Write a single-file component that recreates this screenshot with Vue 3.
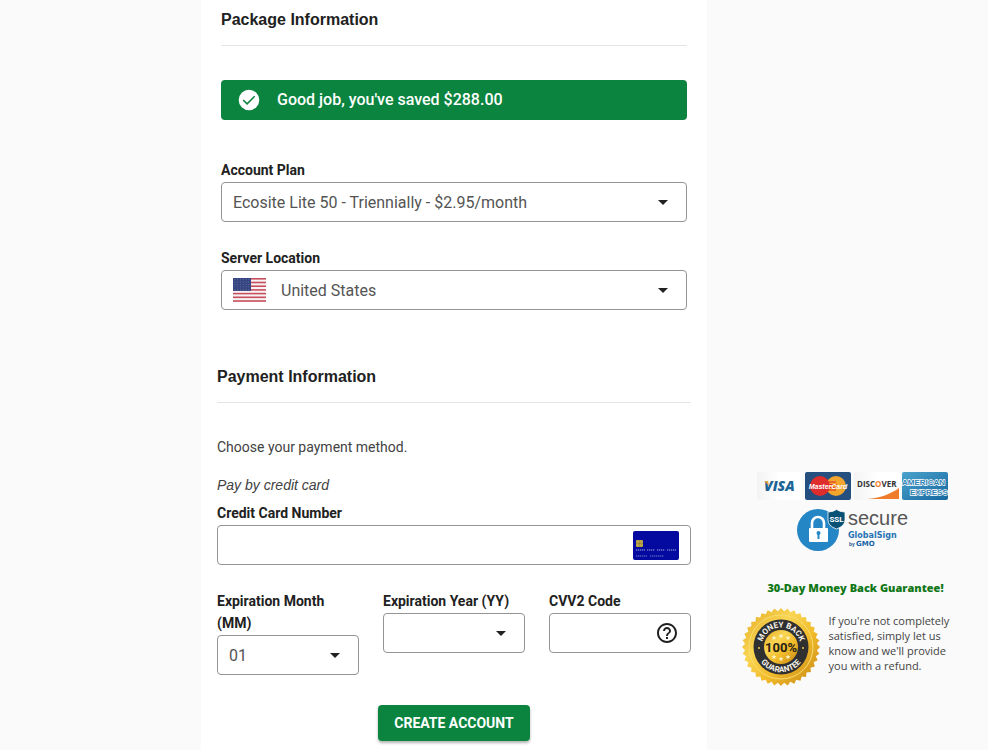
<template>
    <div class="page">
        <form class="checkout" @submit.prevent>
            <section class="package">
                <h2>Package Information</h2>

                <div class="alert" role="status">
                    <svg width="24" height="24" viewBox="0 0 24 24">
                        <circle cx="12" cy="12" r="10.3" fill="#fff" />
                        <path
                            d="M6.2 12l3.9 3.9 7.6-7.6"
                            fill="none"
                            stroke="#0a843e"
                            stroke-width="1.5"
                        />
                    </svg>
                    <span>Good job, you've saved $288.00</span>
                </div>

                <div class="field">
                    <label for="plan">Account Plan</label>
                    <div class="box">
                        <select id="plan" v-model="plan">
                            <option v-for="p in plans" :key="p">{{ p }}</option>
                        </select>
                        <svg class="arrow" viewBox="0 0 24 24">
                            <path d="M7 10l5 5 5-5z" />
                        </svg>
                    </div>
                </div>

                <div class="field">
                    <label for="location">Server Location</label>
                    <div class="box">
                        <svg class="flag" viewBox="0 0 33 24">
                            <rect width="33" height="24" fill="#f7f3f4" />
                            <rect
                                v-for="n in 7"
                                :key="n"
                                :y="(n - 1) * 3.7"
                                width="33"
                                height="1.6"
                                fill="#c8505e"
                            />
                            <rect width="18" height="12.9" fill="#374680" />
                            <template v-for="r in 5" :key="r">
                                <circle
                                    v-for="c in 6"
                                    :key="c"
                                    :cx="c * 2.8 - 0.9"
                                    :cy="r * 2.4 - 0.8"
                                    r="0.4"
                                    fill="#8d99c2"
                                />
                            </template>
                        </svg>
                        <select id="location" v-model="country">
                            <option v-for="c in countries" :key="c">
                                {{ c }}
                            </option>
                        </select>
                        <svg class="arrow" viewBox="0 0 24 24">
                            <path d="M7 10l5 5 5-5z" />
                        </svg>
                    </div>
                </div>
            </section>

            <section class="payment">
                <h2>Payment Information</h2>
                <p>Choose your payment method.</p>
                <p class="method">Pay by credit card</p>

                <div class="field">
                    <label for="card">Credit Card Number</label>
                    <div class="box">
                        <input id="card" v-model="card" type="text" />
                        <svg class="card-icon" viewBox="0 0 46 29">
                            <rect width="46" height="29" rx="2" fill="#0409a0" />
                            <rect
                                x="3"
                                y="9"
                                width="7"
                                height="7"
                                rx="1"
                                fill="#b9a548"
                            />
                            <path d="M3 12.5h7M6.5 9v7" stroke="#85783d" stroke-width="0.5" />
                            <path
                                d="M3 19h9M14 19h8M24 19h8M34 19h9"
                                stroke="#7077c6"
                                stroke-width="1.6"
                                stroke-dasharray="1.3 0.7"
                            />
                            <path
                                d="M3 25h11M17 25h14"
                                stroke="#4a51b8"
                                stroke-width="1.3"
                                stroke-dasharray="1.4 0.6"
                            />
                        </svg>
                    </div>
                </div>

                <div class="card-details">
                    <div class="field">
                        <label for="month">Expiration Month (MM)</label>
                        <div class="box">
                            <select id="month" v-model="month">
                                <option v-for="m in months" :key="m">
                                    {{ m }}
                                </option>
                            </select>
                            <svg class="arrow" viewBox="0 0 24 24">
                                <path d="M7 10l5 5 5-5z" />
                            </svg>
                        </div>
                    </div>
                    <div class="field">
                        <label for="year">Expiration Year (YY)</label>
                        <div class="box">
                            <select id="year" v-model="year">
                                <option value=""></option>
                                <option v-for="y in years" :key="y">
                                    {{ y }}
                                </option>
                            </select>
                            <svg class="arrow" viewBox="0 0 24 24">
                                <path d="M7 10l5 5 5-5z" />
                            </svg>
                        </div>
                    </div>
                    <div class="field">
                        <label for="cvv">CVV2 Code</label>
                        <div class="box">
                            <input id="cvv" v-model="cvv" type="text" />
                            <svg class="help" viewBox="0 0 24 24">
                                <path
                                    d="M11 18h2v-2h-2v2zm1-16C6.48 2 2 6.48 2 12s4.48 10 10 10 10-4.48 10-10S17.52 2 12 2zm0 18c-4.41 0-8-3.59-8-8s3.59-8 8-8 8 3.59 8 8-3.59 8-8 8zm0-14c-2.21 0-4 1.79-4 4h2c0-1.1.9-2 2-2s2 .9 2 2c0 2-3 1.75-3 5h2c0-2.25 3-2.5 3-5 0-2.21-1.79-4-4-4z"
                                />
                            </svg>
                        </div>
                    </div>
                </div>

                <button type="submit" class="submit">CREATE ACCOUNT</button>
            </section>
        </form>

        <aside class="trust">
            <div class="trust-inner">
                <div class="logos">
                    <svg width="192" height="28" viewBox="0 0 192 28">
                        <defs>
                            <linearGradient id="paper" x2="1" y2="0">
                                <stop offset="0" stop-color="#f3f3f3" />
                                <stop offset="0.5" stop-color="#fff" />
                            </linearGradient>
                            <linearGradient id="amex" x2="1" y2="1">
                                <stop offset="0" stop-color="#4ba3cc" />
                                <stop offset="1" stop-color="#1668a0" />
                            </linearGradient>
                        </defs>
                        <rect width="45" height="28" rx="2" fill="url(#paper)" />
                        <text
                            x="7"
                            y="19"
                            font-family="Open Sans, sans-serif"
                            font-size="14"
                            font-weight="800"
                            font-style="italic"
                            fill="#1d6496"
                        >VISA</text>
                        <path d="M7.4 9h3.6l1 5z" fill="#e8a13c" />

                        <rect x="48" width="46" height="28" rx="2" fill="#254f7f" />
                        <circle cx="79" cy="14" r="10" fill="#f2a62e" />
                        <circle cx="63" cy="14" r="10" fill="#df2c2d" />
                        <path
                            d="M72 10h7M71 12.5h9M71 15.5h9M72 18h7"
                            stroke="#df2c2d"
                            stroke-width="1"
                        />
                        <text
                            x="71"
                            y="17"
                            text-anchor="middle"
                            font-family="Liberation Sans, sans-serif"
                            font-size="7"
                            font-weight="700"
                            font-style="italic"
                            fill="#fff"
                        >MasterCard</text>

                        <rect x="97" width="46" height="28" rx="2" fill="url(#paper)" />
                        <text
                            x="100"
                            y="15"
                            font-family="Open Sans, sans-serif"
                            font-size="8"
                            font-weight="700"
                            fill="#333"
                        >DISC<tspan fill="#ee7c2b">O</tspan>VER</text>
                        <path d="M110 27c13-1 24-5 32-11v11z" fill="#ee7c2b" />

                        <rect x="145" width="46" height="28" rx="2" fill="url(#amex)" />
                        <g
                            font-family="Liberation Sans, sans-serif"
                            font-size="8"
                            font-weight="700"
                            fill="#2e83b3"
                            stroke="#fff"
                            stroke-width="1.3"
                            paint-order="stroke"
                        >
                            <text x="145" y="13">AMERICAN</text>
                            <text x="153" y="23">EXPRESS</text>
                        </g>
                    </svg>

                    <svg width="112" height="44" viewBox="0 0 112 44">
                        <circle cx="21" cy="22" r="21" fill="#2486c5" />
                        <path
                            d="M15 21v-6a6 6 0 0 1 12 0v6"
                            fill="none"
                            stroke="#fff"
                            stroke-width="2.6"
                        />
                        <rect x="12" y="20" width="19" height="14" rx="1" fill="#fff" />
                        <circle cx="21.5" cy="25" r="2" fill="#2486c5" />
                        <rect x="20.5" y="25" width="2" height="6" fill="#2486c5" />
                        <path
                            d="M31 4q5 0 8.5-2.5Q43 4 48 4v8q0 6-8.5 9Q31 18 31 12z"
                            fill="#0a5176"
                            stroke="#fafafa"
                            stroke-width="0.8"
                        />
                        <text
                            x="39.5"
                            y="14"
                            text-anchor="middle"
                            font-family="Roboto, sans-serif"
                            font-size="8"
                            font-weight="700"
                            fill="#fff"
                        >SSL</text>
                        <text
                            x="51"
                            y="17"
                            font-family="Liberation Sans, sans-serif"
                            font-size="20"
                            fill="#555"
                        >secure</text>
                        <text
                            x="51"
                            y="30"
                            font-family="DejaVu Sans, sans-serif"
                            font-size="8"
                            font-weight="700"
                            fill="#2673b3"
                        >GlobalSign</text>
                        <text
                            x="52"
                            y="38"
                            font-family="Liberation Sans, sans-serif"
                            font-size="5"
                            font-weight="700"
                            fill="#174f86"
                        >by</text>
                        <text
                            x="59"
                            y="38"
                            font-family="DejaVu Sans, sans-serif"
                            font-size="7"
                            font-weight="700"
                            fill="#1762a5"
                        >GMO</text>
                    </svg>
                </div>

                <h3>30-Day Money Back Guarantee!</h3>

                <div class="guarantee">
                    <svg class="seal" viewBox="0 0 80 80">
                        <defs>
                            <linearGradient id="gold" x2="1" y2="1">
                                <stop offset="0" stop-color="#e2a51c" />
                                <stop offset="0.35" stop-color="#f9d654" />
                                <stop offset="0.6" stop-color="#f3bd2c" />
                                <stop offset="1" stop-color="#c48411" />
                            </linearGradient>
                            <path id="arc-top" d="M20.5 40a19.5 19.5 0 0 1 39 0" />
                            <path id="arc-bottom" d="M14.8 40a25.2 25.2 0 0 0 50.400 0" />
                        </defs>
                        <polygon :points="sealPoints" fill="url(#gold)" />
                        <circle
                            cx="40"
                            cy="40"
                            r="32"
                            fill="none"
                            stroke="#f8dc72"
                            stroke-width="1"
                        />
                        <circle cx="40" cy="40" r="27.5" fill="#303031" />
                        <circle cx="40" cy="40" r="17" fill="url(#gold)" />
                        <g
                            font-family="Roboto, sans-serif"
                            font-size="8"
                            font-weight="700"
                            fill="#f7f4ea"
                            text-anchor="middle"
                        >
                            <text>
                                <textPath href="#arc-top" startOffset="50%">MONEY BACK</textPath>
                            </text>
                            <text>
                                <textPath href="#arc-bottom" startOffset="50%">GUARANTEE</textPath>
                            </text>
                        </g>
                        <circle cx="18" cy="41" r="1" fill="#f3c64a" />
                        <circle cx="62" cy="41" r="1" fill="#f3c64a" />
                        <text
                            x="40"
                            y="45"
                            text-anchor="middle"
                            font-family="Roboto, sans-serif"
                            font-size="13"
                            font-weight="700"
                            fill="#262014"
                        >100%</text>
                        <path
                            v-for="s in stars"
                            :key="s.x + '-' + s.y"
                            :transform="`translate(${s.x} ${s.y})`"
                            d="M0-2.400L.7-.8 2.400-.7 1.100.4 1.500 2 0 1.100-1.500 2-1.100.4-2.400-.7-.7-.8z"
                            fill="#fff6cf"
                        />
                    </svg>
                    <p>
                        If you're not completely satisfied, simply let us know
                        and we'll provide you with a refund.
                    </p>
                </div>
            </div>
        </aside>
    </div>
</template>

<script setup>
import { ref } from "vue";

const plans = ["Ecosite Lite 50 - Triennially - $2.95/month"];
const countries = ["United States"];
const months = Array.from({ length: 12 }, (_, i) =>
    String(i + 1).padStart(2, "0")
);
const years = Array.from({ length: 10 }, (_, i) => String(24 + i));

const plan = ref(plans[0]);
const country = ref(countries[0]);
const card = ref("");
const month = ref("01");
const year = ref("");
const cvv = ref("");

// toothed edge of the guarantee seal
const sealPoints = Array.from({ length: 72 }, (_, i) => {
    const r = i % 2 ? 36 : 39;
    const a = (i * Math.PI) / 36;
    return `${40 + r * Math.cos(a)},${40 + r * Math.sin(a)}`;
}).join(" ");

const stars = [
    { x: 33, y: 31 },
    { x: 40, y: 29 },
    { x: 47, y: 31 },
    { x: 33, y: 50 },
    { x: 40, y: 52 },
    { x: 47, y: 50 },
];
</script>

<style>
body {
    margin: 0;
    background: #fafafa;
}
</style>

<style scoped>
.page {
    box-sizing: border-box;
    min-height: 100vh;
    display: grid;
    grid-template-columns: 201fr 506fr 281fr;
    font-family: Roboto, "Liberation Sans", sans-serif;
    font-size: 14px;
    line-height: 22px;
    color: #212121;
}
.checkout {
    grid-column: 2;
    background: #fff;
    padding: 8px 16px;
}
.package {
    padding: 0 4px;
}
h2 {
    margin: 0 0 33px;
    padding-bottom: 13px;
    border-bottom: 1px solid #e4e4e4;
    font-family: "Liberation Sans", sans-serif;
    font-size: 16px;
    line-height: 24px;
    font-weight: 700;
}
.alert {
    display: flex;
    align-items: center;
    gap: 16px;
    height: 40px;
    padding: 0 16px;
    margin: 34px 0 39px;
    border-radius: 4px;
    background: #0a843e;
    color: #fff;
    font-size: 16px;
    font-weight: 500;
}
.field {
    margin-bottom: 25px;
}
label {
    display: block;
    margin-bottom: 1px;
    font-weight: 700;
}
.box {
    position: relative;
    box-sizing: border-box;
    display: flex;
    align-items: center;
    height: 40px;
    padding-left: 11px;
    border: 1px solid #949494;
    border-radius: 4px;
    background: #fff;
}
select,
input {
    flex: 1;
    min-width: 0;
    height: 100%;
    padding: 0;
    border: 0;
    outline: 0;
    appearance: none;
    background: transparent;
    font-family: inherit;
    font-size: 16px;
    color: #545454;
}
.arrow,
.help {
    position: absolute;
    right: 11px;
    width: 24px;
    height: 24px;
    fill: #212121;
    pointer-events: none;
}
.flag {
    width: 33px;
    height: 24px;
    margin-right: 15px;
}
.card-icon {
    width: 46px;
    height: 29px;
    margin-right: 11px;
}
.payment {
    padding-top: 30px;
}
p {
    margin: 0 0 16px;
    color: #424242;
}
.method {
    margin-bottom: 6px;
    font-family: "Liberation Sans", sans-serif;
    font-style: italic;
}
.card-details {
    display: grid;
    grid-template-columns: repeat(3, minmax(0, 1fr));
    gap: 24px;
}
.card-details .field {
    margin-bottom: 30px;
}
.submit {
    display: block;
    margin: 0 auto;
    height: 36px;
    padding: 0 16px;
    border: 0;
    border-radius: 4px;
    background: #0a843e;
    box-shadow: 0 2px 3px rgba(0, 0, 0, 0.3);
    color: #fff;
    font-family: inherit;
    font-size: 14px;
    font-weight: 700;
}
.trust {
    display: flex;
    justify-content: center;
    padding-top: 472px;
}
.trust-inner {
    width: 214px;
}
.logos {
    display: flex;
    flex-direction: column;
    align-items: center;
    gap: 8px;
    padding-left: 10px;
}
h3 {
    margin: 25px 0 8px;
    padding-left: 16px;
    font-family: "Open Sans", sans-serif;
    font-size: 11px;
    line-height: 22px;
    font-weight: 800;
    text-align: center;
    white-space: nowrap;
    color: #107716;
}
.guarantee {
    display: flex;
    gap: 8px;
}
.guarantee p {
    flex: 1;
    margin: 6px 0 0;
    font-family: "Open Sans", sans-serif;
    font-size: 11px;
    line-height: 15px;
    color: #444;
}
.seal {
    flex: none;
    width: 80px;
    height: 80px;
}
</style>
